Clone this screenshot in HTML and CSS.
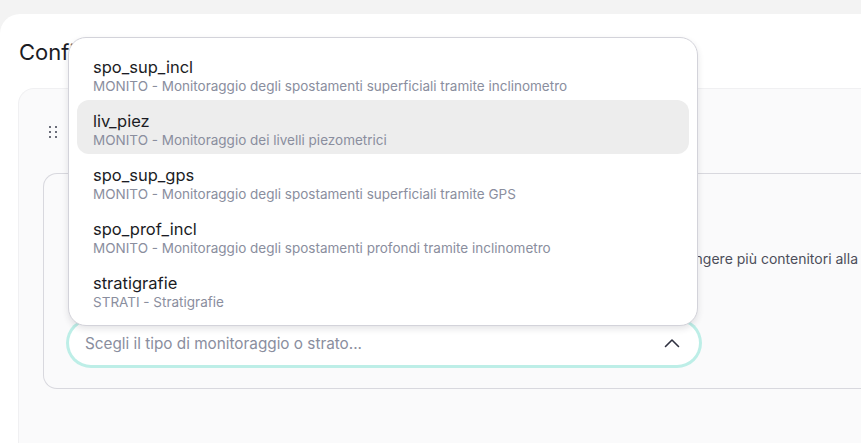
FILE: index.html
```html
<!DOCTYPE html>
<html>
	<head>
		<meta charset="UTF-8">
		<title>Configurazione sezione</title>
		<link rel="stylesheet" href="styles.css">
	</head>
	<body>
		<div class="card">
			<h1>Configurazione della sezione</h1>

			<div class="panel">
				<div class="panel-head">
					<svg class="grip" width="8" height="12" viewBox="0 0 8 12">
						<rect x="0" y="0" width="2" height="2"/>
						<rect x="6" y="0" width="2" height="2"/>
						<rect x="0" y="5" width="2" height="2"/>
						<rect x="6" y="5" width="2" height="2"/>
						<rect x="0" y="10" width="2" height="2"/>
						<rect x="6" y="10" width="2" height="2"/>
					</svg>
					<span class="panel-title">Contenitore 1</span>
				</div>

				<div class="box">
					<div class="box-label">Tipo di contenitore</div>
					<p class="hint">Seleziona il tipo di dati da mostrare in questo stesso contenitore della pagina. È possibile aggiungere più contenitori alla sezione.</p>

					<div class="select-wrap">
						<div class="select">
							<span class="placeholder">Scegli il tipo di monitoraggio o strato...</span>
							<svg class="chevron" width="16" height="10" viewBox="0 0 16 10">
								<path d="M1.5 8.5 L8 2 L14.5 8.5" fill="none" stroke="#2f3140" stroke-width="1.6" stroke-linecap="round" stroke-linejoin="round"/>
							</svg>
						</div>

						<ul class="menu">
							<li>
								<div class="opt-name">spo_sup_incl</div>
								<div class="opt-desc">MONITO - Monitoraggio degli spostamenti superficiali tramite inclinometro</div>
							</li>
							<li class="active">
								<div class="opt-name">liv_piez</div>
								<div class="opt-desc">MONITO - Monitoraggio dei livelli piezometrici</div>
							</li>
							<li>
								<div class="opt-name">spo_sup_gps</div>
								<div class="opt-desc">MONITO - Monitoraggio degli spostamenti superficiali tramite GPS</div>
							</li>
							<li>
								<div class="opt-name">spo_prof_incl</div>
								<div class="opt-desc">MONITO - Monitoraggio degli spostamenti profondi tramite inclinometro</div>
							</li>
							<li>
								<div class="opt-name">stratigrafie</div>
								<div class="opt-desc">STRATI - Stratigrafie</div>
							</li>
						</ul>
					</div>
				</div>
			</div>
		</div>
	</body>
</html>
```

FILE: styles.css
```css
html, body, h1, p, ul, li {
	margin: 0;
	padding: 0;
}
html {
	height: 100%;
}
body {
	height: 100%;
	padding-top: 14px;
	box-sizing: border-box;
	overflow: hidden;
	background: #F3F3F3;
	font-family: "Inter", "Liberation Sans", sans-serif;
	color: #1B1C24;
}
.card {
	height: 100%;
	padding: 24px 0 0 18px;
	box-sizing: border-box;
	background: #FFFFFF;
	border-top-left-radius: 20px;
	overflow: hidden;
}
h1 {
	height: 28px;
	margin-left: 1px;
	font-size: 22px;
	font-weight: 400;
	line-height: 28px;
	white-space: nowrap;
}
.panel {
	margin-top: 22px;
	height: 400px;
	padding: 22px 0 0 24px;
	background: #FAFAFB;
	border: 1px solid #F0F0F2;
	border-right: none;
	border-top-left-radius: 16px;
}
.panel-head {
	display: flex;
	align-items: center;
	gap: 14px;
	height: 42px;
	padding-left: 6px;
}
.grip {
	fill: #6B6E7A;
}
.panel-title {
	font-size: 16px;
}
.box {
	margin-top: 20px;
	padding: 24px 0 23px 25px;
	background: #FAFAFB;
	border: 1px solid #D8D8DE;
	border-right: none;
	border-radius: 14px 0 0 14px;
}
.box-label {
	font-size: 15px;
	line-height: 22px;
}
.hint {
	margin-top: 28px;
	font-size: 14px;
	line-height: 22px;
	color: #4C4E5A;
	white-space: nowrap;
}
.select-wrap {
	position: relative;
	width: 630px;
	margin-top: 51px;
}
.select {
	display: flex;
	align-items: center;
	justify-content: space-between;
	height: 44px;
	padding: 0 19px 0 16px;
	background: #FFFFFF;
	border-radius: 22px;
	box-shadow: 0 0 0 3px #BDEEE7;
}
.placeholder {
	font-size: 15.3px;
	color: #8A8E9E;
}
.chevron {
	display: block;
}

/* open option list, drawn over the field */
.menu {
	position: absolute;
	left: -1px;
	bottom: 39px;
	width: 612px;
	padding: 8px 8px 9px;
	list-style: none;
	background: #FFFFFF;
	border: 1px solid #D3D3DA;
	border-radius: 18px;
	box-shadow: 0 3px 6px rgba(40, 40, 60, 0.12);
}
.menu li {
	height: 54px;
	padding: 11px 16px 0;
	box-sizing: border-box;
	border-radius: 12px;
}
.menu li.active {
	background: #EDEDED;
}
.opt-name {
	font-size: 16.5px;
	line-height: 20px;
	color: #1B1C24;
}
.opt-desc {
	font-size: 13.5px;
	line-height: 18px;
	color: #8A8E9E;
}
```
